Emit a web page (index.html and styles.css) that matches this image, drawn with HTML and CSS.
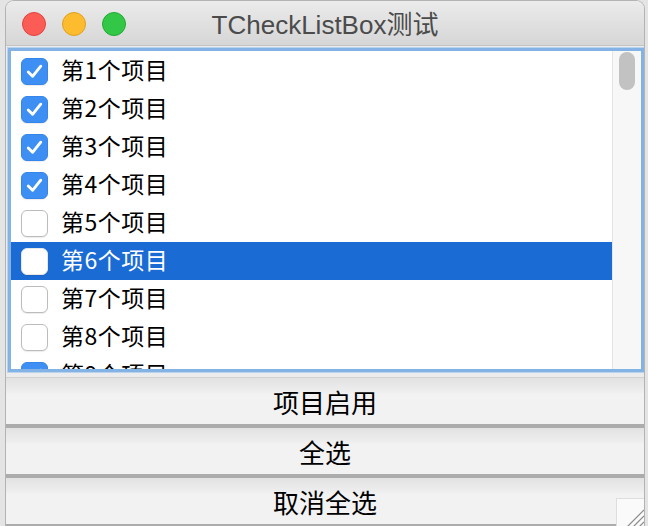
FILE: index.html
```html
<!DOCTYPE html>
<html lang="zh-CN">
<head>
<meta charset="utf-8">
<title>TCheckListBox测试</title>
<link rel="stylesheet" href="styles.css">
</head>
<body>
<div class="window">
  <div class="titlebar">
    <div class="lights">
      <span class="light red"></span>
      <span class="light yellow"></span>
      <span class="light green"></span>
    </div>
    <div class="title">TCheckListBox测试</div>
  </div>
  <div class="content">
    <div class="listbox">
      <div class="items">
        <div class="row"><span class="cb checked"><svg viewBox="0 0 26 26"><path d="M6.5 13.5 L11 18 L19.5 7.5"/></svg></span><span class="label">第1个项目</span></div>
        <div class="row"><span class="cb checked"><svg viewBox="0 0 26 26"><path d="M6.5 13.5 L11 18 L19.5 7.5"/></svg></span><span class="label">第2个项目</span></div>
        <div class="row"><span class="cb checked"><svg viewBox="0 0 26 26"><path d="M6.5 13.5 L11 18 L19.5 7.5"/></svg></span><span class="label">第3个项目</span></div>
        <div class="row"><span class="cb checked"><svg viewBox="0 0 26 26"><path d="M6.5 13.5 L11 18 L19.5 7.5"/></svg></span><span class="label">第4个项目</span></div>
        <div class="row"><span class="cb"></span><span class="label">第5个项目</span></div>
        <div class="row selected"><span class="cb"></span><span class="label">第6个项目</span></div>
        <div class="row"><span class="cb"></span><span class="label">第7个项目</span></div>
        <div class="row"><span class="cb"></span><span class="label">第8个项目</span></div>
        <div class="row"><span class="cb checked"><svg viewBox="0 0 26 26"><path d="M6.5 13.5 L11 18 L19.5 7.5"/></svg></span><span class="label">第9个项目</span></div>
      </div>
      <div class="scrollbar"><div class="thumb"></div></div>
    </div>
    <div class="buttons">
      <div class="btn">项目启用</div>
      <div class="btn">全选</div>
      <div class="btn">取消全选</div>
    </div>
    <div class="grip">
      <svg viewBox="0 0 28 29"><path d="M10 28 L27 11 M16 28 L27 17 M22 28 L27 23"/></svg>
    </div>
  </div>
</div>
</body>
</html>
```

FILE: styles.css
```css
html, body {
  margin: 0;
  padding: 0;
}
body {
  background: #e4e4e4;
  width: 648px;
  height: 526px;
  overflow: hidden;
  font-family: "Noto Sans CJK SC", "Liberation Sans", sans-serif;
}
.window {
  margin-left: 5px;
  width: 638px;
  height: 526px;
  border: 1px solid #b3b3b3;
  border-bottom: none;
  border-radius: 9px 9px 0 0;
  background: #ececec;
  display: flex;
  flex-direction: column;
  overflow: hidden;
}
.titlebar {
  height: 44px;
  flex: none;
  background: linear-gradient(#ebebeb, #d6d6d6);
  border-bottom: 1px solid #c3c3c3;
  display: flex;
  align-items: center;
  justify-content: center;
  position: relative;
}
.lights {
  position: absolute;
  left: 16px;
  top: 11px;
  display: flex;
  gap: 16px;
}
.light {
  width: 24px;
  height: 24px;
  border-radius: 50%;
  box-sizing: border-box;
}
.red { background: #fc5c56; border: 1px solid #e1443e; }
.yellow { background: #fdbc2e; border: 1px solid #e0a022; }
.green { background: #33c748; border: 1px solid #25a933; }
.title {
  font-family: "Liberation Sans", "Noto Sans CJK SC", sans-serif;
  font-size: 26px;
  color: #4b4b4b;
  margin-bottom: 2px;
}
.content {
  flex: 1;
  display: flex;
  flex-direction: column;
  position: relative;
}
.listbox {
  margin: 2px 0 0 2px;
  width: 636px;
  height: 324px;
  box-sizing: border-box;
  border: 3px solid #83b3e4;
  box-shadow: 0 0 0 1px #b9d3ee;
  background: #fff;
  display: flex;
  overflow: hidden;
}
.items {
  flex: 1;
  padding-top: 1px;
  overflow: hidden;
}
.row {
  height: 38px;
  display: flex;
  align-items: center;
  padding-left: 10px;
}
.row.selected {
  background: #1b6bd5;
  color: #fff;
}
.cb {
  width: 27px;
  height: 27px;
  box-sizing: border-box;
  border-radius: 6px;
  background: #fff;
  border: 1px solid #bcbcbc;
  box-shadow: 0 1px 1px rgba(0,0,0,0.08);
  flex: none;
  display: flex;
}
.selected .cb {
  border-color: #e8e8e8;
}
.cb.checked {
  background: #3d8ff3;
  border-color: #3585ea;
}
.cb svg {
  width: 100%;
  height: 100%;
}
.cb path {
  fill: none;
  stroke: #fff;
  stroke-width: 3;
  stroke-linecap: round;
  stroke-linejoin: round;
}
.label {
  margin-left: 13px;
  font-size: 23px;
  line-height: 1;
  letter-spacing: 0.5px;
  color: #000;
  position: relative;
  top: -2px;
}
.selected .label {
  color: #fff;
}
.scrollbar {
  width: 29px;
  flex: none;
  background: #f7f7f7;
  border-left: 1px solid #e4e4e4;
  padding: 1px 0 0 6px;
  box-sizing: border-box;
}
.thumb {
  width: 16px;
  height: 38px;
  border-radius: 8px;
  background: #c2c2c2;
}
.buttons {
  margin-top: 5px;
  display: flex;
  flex-direction: column;
  border-top: 1px solid #d0d0d0;
}
.btn {
  height: 46px;
  border-bottom: 4px solid #acacac;
  background: linear-gradient(#e2e2e2 0px, #eeeeee 14px, #f2f2f2 16px, #f2f2f2 100%);
  display: flex;
  align-items: center;
  justify-content: center;
  font-size: 26px;
  color: #000;
}
.grip {
  position: absolute;
  right: -1px;
  bottom: 0;
  width: 28px;
  height: 29px;
  background: #fafafa;
  border-left: 1px solid #dedede;
  border-top: 1px solid #dedede;
}
.grip svg {
  width: 28px;
  height: 29px;
  display: block;
}
.grip path {
  stroke: #8a8a8a;
  stroke-width: 1.2;
  fill: none;
}
```
